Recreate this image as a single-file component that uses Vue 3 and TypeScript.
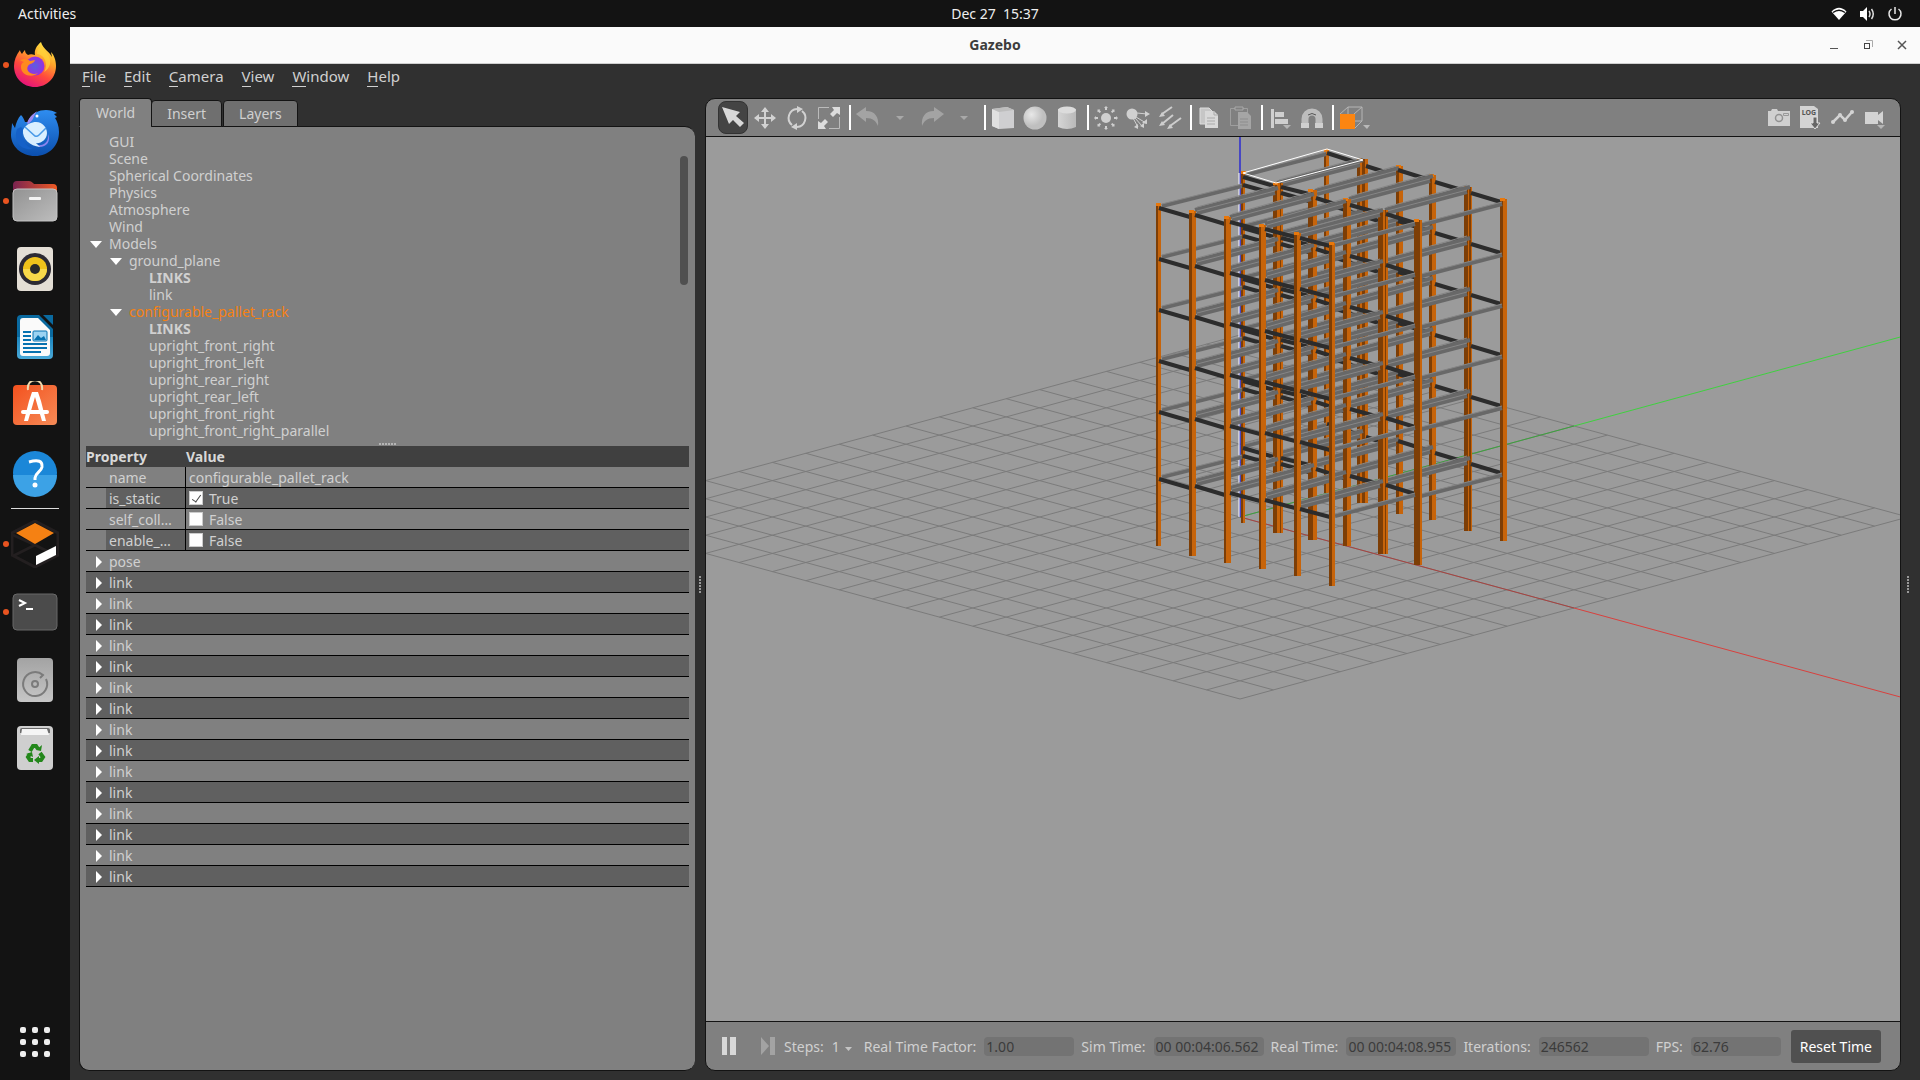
<script setup lang="ts">
import { ref } from 'vue'

interface TreeRow { label: string; depth: number; open?: boolean; bold?: boolean; selected?: boolean }
interface Prop { name: string; kind: 'text' | 'bool'; value: string }
type Seg = [number, number, number, number]
interface Post { x: number; top: number; bottom: number; strips: number[] }

const menus = ['File', 'Edit', 'Camera', 'View', 'Window', 'Help']
const tabs = ['World', 'Insert', 'Layers']
const activeTab = ref('World')

const tree: TreeRow[] = [
  { label: 'GUI', depth: 0 },
  { label: 'Scene', depth: 0 },
  { label: 'Spherical Coordinates', depth: 0 },
  { label: 'Physics', depth: 0 },
  { label: 'Atmosphere', depth: 0 },
  { label: 'Wind', depth: 0 },
  { label: 'Models', depth: 0, open: true },
  { label: 'ground_plane', depth: 1, open: true },
  { label: 'LINKS', depth: 2, bold: true },
  { label: 'link', depth: 2 },
  { label: 'configurable_pallet_rack', depth: 1, open: true, selected: true },
  { label: 'LINKS', depth: 2, bold: true },
  { label: 'upright_front_right', depth: 2 },
  { label: 'upright_front_left', depth: 2 },
  { label: 'upright_rear_right', depth: 2 },
  { label: 'upright_rear_left', depth: 2 },
  { label: 'upright_front_right', depth: 2 },
  { label: 'upright_front_right_parallel', depth: 2 },
  { label: 'upright_front_left_parallel', depth: 2 },
]

const props: Prop[] = [
  { name: 'name', kind: 'text', value: 'configurable_pallet_rack' },
  { name: 'is_static', kind: 'bool', value: 'True' },
  { name: 'self_coll…', kind: 'bool', value: 'False' },
  { name: 'enable_…', kind: 'bool', value: 'False' },
]
const groups: string[] = ['pose', ...Array.from({ length: 15 }, () => 'link')]

const stats = [
  { id: 'rtf', label: 'Real Time Factor:', value: '1.00', wide: false },
  { id: 'sim', label: 'Sim Time:', value: '00 00:04:06.562', wide: true },
  { id: 'real', label: 'Real Time:', value: '00 00:04:08.955', wide: true },
  { id: 'iter', label: 'Iterations:', value: '246562', wide: true },
  { id: 'fps', label: 'FPS:', value: '62.76', wide: false },
]

// Ground plane: 20 x 20 cells seen through an orthographic camera.
const origin = { x: 1240, y: 517 }
const cell = { x: 33.4, y: 9.1 }
const project = (x: number, y: number) => [origin.x + cell.x * (x + y), origin.y + cell.y * (x - y)]
const gridLines: Seg[] = []
for (let i = -10; i <= 10; i++) {
  gridLines.push([...project(i, -10), ...project(i, 10)] as Seg)
  gridLines.push([...project(-10, i), ...project(10, i)] as Seg)
}

// Rack: six columns, each with a back, middle and front post, and six shelf levels.
const levels = [271, 204, 153, 102, 51, 0]
const back: Post[] = [
  { x: 1324, top: 150, bottom: 493, strips: [2, 3] },
  { x: 1357, top: 159, bottom: 503, strips: [3, 2, 3, 3] },
  { x: 1396, top: 166, bottom: 514, strips: [3, 4] },
  { x: 1429, top: 175, bottom: 520, strips: [3, 4] },
  { x: 1464, top: 187, bottom: 531, strips: [4, 1, 2, 1] },
  { x: 1500, top: 199, bottom: 541, strips: [3, 4] },
]
const middle: Post[] = [
  { x: 1241, top: 172, bottom: 523, strips: [2, 2] },
  { x: 1273, top: 183, bottom: 533, strips: [4, 3, 1, 2] },
  { x: 1308, top: 190, bottom: 540, strips: [5, 4] },
  { x: 1343, top: 199, bottom: 546, strips: [4, 4] },
  { x: 1378, top: 210, bottom: 554, strips: [5, 2, 1, 2] },
  { x: 1414, top: 220, bottom: 565, strips: [6, 2] },
]
const front: Post[] = [
  { x: 1156, top: 204, bottom: 546, strips: [2, 3] },
  { x: 1189, top: 211, bottom: 556, strips: [3, 4] },
  { x: 1224, top: 217, bottom: 563, strips: [2, 5] },
  { x: 1259, top: 225, bottom: 569, strips: [2, 5] },
  { x: 1294, top: 233, bottom: 576, strips: [3, 4] },
  { x: 1329, top: 243, bottom: 586, strips: [3, 3] },
]
const backBeams: Seg[] = [
  [1245, 175, 1326, 154], [1279, 186, 1360, 165], [1317, 194, 1396, 173],
  [1351, 202, 1430, 181], [1387, 213, 1467, 192], [1421, 225, 1502, 204],
]
const frontBeams: Seg[] = [
  [1162, 206, 1242, 186], [1197, 213, 1275, 193], [1232, 220, 1311, 199],
  [1267, 227, 1343, 206], [1300, 236, 1380, 215], [1335, 245, 1415, 224],
]
const backBraces: Seg[] = [
  [1327, 153, 1358, 163], [1366, 166, 1388, 173], [1398, 170, 1430, 180],
  [1435, 182, 1465, 191], [1471, 193, 1501, 202],
]
const middleBraces: Seg[][] = [
  [[1243, 177, 1274, 186], [1243, 185, 1268, 192]],
  [[1281, 187, 1309, 194], [1281, 193, 1309, 201]],
  [[1316, 198, 1344, 207]],
  [[1350, 205, 1379, 213]],
  [[1386, 214, 1415, 223]],
]
const frontBraces: Seg[] = [
  [1159, 208, 1190, 217], [1195, 215, 1225, 224], [1230, 222, 1260, 230],
  [1265, 229, 1295, 237], [1300, 238, 1330, 246],
]

interface Shape { key: string; kind: 'brace' | 'beam' | 'edge' | 'dark' | 'lit' | 'cap'; d: string }
const shapes: Shape[] = []
let serial = 0
const add = (kind: Shape['kind'], d: string) => shapes.push({ key: `s${serial++}`, kind, d })
const brace = ([x1, y1, x2, y2]: Seg) =>
  levels.forEach((l) => add('brace', `M${x1} ${y1 + l}L${x2} ${y2 + l}`))
const beam = ([x1, y1, x2, y2]: Seg, twin: boolean) =>
  levels.forEach((l) => {
    if (twin) {
      add('beam', `M${x1 - 2} ${y1 + l - 3}L${x2 + 3} ${y2 + l - 5}`)
      add('edge', `M${x1} ${y1 + l - 6}L${x2} ${y2 + l - 7}`)
    }
    add('beam', `M${x1} ${y1 + l}L${x2} ${y2 + l}`)
    add('edge', `M${x1} ${y1 + l - 2}L${x2} ${y2 + l - 2}`)
  })
const post = (p: Post) => {
  let x = p.x
  p.strips.forEach((w, i) => {
    add(i % 2 ? 'lit' : 'dark', `M${x} ${p.top}h${w}V${p.bottom}h${-w}z`)
    x += w
  })
  add('cap', `M${p.x} ${p.top - 1}h5v3h-5z`)
}
for (let i = 0; i < 6; i++) {
  const twin = i > 0 && i < 5
  if (i > 0) brace(backBraces[i - 1])
  post(back[i])
  beam(backBeams[i], twin)
  if (i > 0) middleBraces[i - 1].forEach(brace)
  post(middle[i])
  beam(frontBeams[i], twin)
  if (i > 0) brace(frontBraces[i - 1])
  post(front[i])
}
</script>

<template>
  <div class="desktop">
    <header class="topbar">
      <button class="activities" type="button">Activities</button>
      <time class="clock">Dec 27&nbsp; 15:37</time>
      <div class="tray">
        <svg width="16" height="16" viewBox="0 0 16 16" aria-label="Wi-Fi"><path d="M.5 5.500Q8-2 15.500 5.500L8 14z" fill="#fff" /><path d="M2 5.500Q8 .8 14 5.500" fill="none" stroke="#131313" stroke-width="1.500" transform="translate(0 1)" /></svg>
        <svg width="16" height="16" viewBox="0 0 16 16" aria-label="Volume"><path d="M1 5h3l4-4v14l-4-4H1z" fill="#fff" /><path d="M10 5q2 3 0 6M12.500 3q3.500 5 0 10" fill="none" stroke="#ddd" stroke-width="1.500" /></svg>
        <svg width="16" height="16" viewBox="0 0 16 16" aria-label="Power"><path d="M4.500 3a6 6 0 1 0 7 0M8 1v7" fill="none" stroke="#e8e8e8" stroke-width="1.500" /></svg>
      </div>
    </header>

    <div class="workspace">
      <nav class="dock" aria-label="Dock">
        <button class="app running" type="button" aria-label="Firefox">
          <svg viewBox="0 0 48 48">
            <defs>
              <linearGradient id="ff" x1=".8" y1="0" x2=".3" y2="1"><stop offset="0" stop-color="#fff04a" /><stop offset=".35" stop-color="#ffa52a" /><stop offset=".65" stop-color="#ff4a3d" /><stop offset="1" stop-color="#e5107e" /></linearGradient>
              <radialGradient id="ffg"><stop offset="0" stop-color="#5a5fe0" /><stop offset="1" stop-color="#9a2fe0" /></radialGradient>
            </defs>
            <path d="M30 1c-5 4-7 9-6 13-3-1-5-1-7 0-2-1-3-3-3-5-1 1-2 2-3 4-1-1-2-3-2-4C5 14 3 20 3 25c0 12 9 21 21 21s21-9 21-21c0-6-2-11-5-14l1 5C38 10 32 8 30 1z" fill="url(#ff)" />
            <circle cx="24" cy="25" r="9.500" fill="url(#ffg)" />
            <path d="M9 19c5-2 8-1 10 1l5-1c-1 4-5 3-7 6-3 5 4 10 10 7-5 5-17 3-17-6 0-3 1-4 3-5-2-1-3-1-4-2z" fill="#ff8a1e" />
            <path d="M26 13c5 0 9 5 9 11 0 3-1 5-2 7 6-3 9-12 3-18-2-3-5-5-6-8-3 2-4 5-4 8z" fill="#ffd43a" opacity=".7" />
          </svg>
        </button>
        <button class="app" type="button" aria-label="Thunderbird">
          <svg viewBox="0 0 48 48">
            <defs><linearGradient id="tb" x1="0" y1="0" x2="0" y2="1"><stop offset="0" stop-color="#2f8df0" /><stop offset="1" stop-color="#0b4fae" /></linearGradient></defs>
            <path d="M10 6c2 2 3 4 4 7h3C20 4 28 1 35 1c4 0 8 1 11 3l-3 1 3 3-2 1c2 3 4 8 4 14 0 14-10 24-24 24S0 37 0 26c0-5 1-8 1-12l3 5C5 14 7 9 10 6z" fill="url(#tb)" />
            <path d="M16 14c3-8 7-9 10-12-5 7-2 8-9 13z" fill="#a08af0" />
            <path d="M6 20c-4 12 4 22 16 20-8-3-13-11-10-20l-2-2z" fill="#1561c8" />
            <path d="M37 25c1 8-4 12-11 11l2 2c8 0 12-6 9-13z" fill="#8b86ee" />
            <path d="M12 21c3-6 9-8 13-8 7 0 11 6 11 11 0 7-7 11-11 10l4 4c-10-1-18-8-17-17z" fill="#d9efff" />
            <path d="M14 18l10 9q2 1 4-1l7-7" fill="none" stroke="#4a9be8" stroke-width="1.500" /><circle cx="26" cy="7" r="1.500" fill="#fff" />
          </svg>
        </button>
        <button class="app running" type="button" aria-label="Files">
          <svg viewBox="0 0 48 48">
            <defs><linearGradient id="fd"><stop offset="0" stop-color="#7a2350" /><stop offset="1" stop-color="#ee5a24" /></linearGradient><linearGradient id="fb" x1="0" y1="0" x2="1" y2="1"><stop offset="0" stop-color="#929292" /><stop offset="1" stop-color="#bdbdbd" /></linearGradient></defs>
            <path d="M2 8q0-4 4-4h12q2 0 4 2l1 1h19q4 0 4 4v10H2z" fill="url(#fd)" />
            <rect x="2" y="12" width="44" height="32" rx="4" fill="url(#fb)" stroke="#c4c4c4" /><rect x="18" y="20" width="12" height="3" rx="1" fill="#f4f4f4" />
          </svg>
        </button>
        <button class="app" type="button" aria-label="Rhythmbox">
          <svg viewBox="0 0 48 48">
            <rect x="6" y="2" width="36" height="44" rx="4" fill="#e3ded5" /><circle cx="24" cy="24" r="16" fill="#2c2a33" /><circle cx="24" cy="24" r="12" fill="#efc21b" /><path d="M12 24a12 12 0 0 0 24 0z" fill="#f8d94a" /><circle cx="24" cy="24" r="5" fill="#2a2a2a" />
          </svg>
        </button>
        <button class="app" type="button" aria-label="LibreOffice Writer">
          <svg viewBox="0 0 48 48">
            <defs><linearGradient id="wr" x1="0" y1="0" x2="0" y2="1"><stop offset=".49" stop-color="#0a6aa0" /><stop offset=".5" stop-color="#1c86bf" /><stop offset="1" stop-color="#4aa9d8" /></linearGradient></defs>
            <path d="M10 2h18l14 14v26q0 4-4 4H10q-4 0-4-4V6q0-4 4-4z" fill="url(#wr)" /><path d="M9 8q0-3 3-3h15l12 12v23q0 3-3 3H12q-3 0-3-3z" fill="#fafafa" /><path d="M32 2h10v10z" fill="#0a6aa0" />
            <path d="M12 19h8M12 23h8M12 27h8M12 31h24M12 35h24M12 39h18" stroke="#0772b0" stroke-width="2" /><rect x="22" y="18" width="14" height="10" rx="1" fill="#9bd3f2" stroke="#0772b0" /><path d="M23 27l4-5 3 3 3-2 2 4z" fill="#0772b0" />
          </svg>
        </button>
        <button class="app" type="button" aria-label="Ubuntu Software">
          <svg viewBox="0 0 48 48">
            <defs><linearGradient id="sw" x1="0" y1="0" x2="1" y2="1"><stop offset="0" stop-color="#f4511e" /><stop offset="1" stop-color="#f58b57" /></linearGradient></defs>
            <rect x="2" y="4" width="44" height="40" rx="4" fill="url(#sw)" /><path d="M17 9c-2-13 16-13 14 0" fill="none" stroke="#f0d9ae" stroke-width="2" />
            <path d="M21 11h6l3 9 5 20h-4L24 16l-7 24h-4l5-20z" fill="#fff" /><rect x="10" y="29" width="28" height="4" rx="2" fill="#fff" />
          </svg>
        </button>
        <button class="app" type="button" aria-label="Help">
          <svg viewBox="0 0 48 48">
            <circle cx="24" cy="24" r="22" fill="#1b87d8" /><path d="M2 26a22 22 0 0 0 44 0z" fill="#3ca2e6" /><path d="M18 13q14-4 13 5c-1 5-6 5-7 11v2" fill="none" stroke="#fff" stroke-width="3" /><circle cx="24" cy="36" r="2.500" fill="#fff" />
          </svg>
        </button>
        <hr class="dock-rule" />
        <button class="app running" type="button" aria-label="Gazebo">
          <svg viewBox="0 0 48 48">
            <path d="M24 1l23 12v22L24 47 1 35V13z" fill="none" stroke="#231f20" stroke-width="3" /><path d="M24 25L2 36M24 25l22 11M2 15l22 10" fill="none" stroke="#231f20" stroke-width="3" />
            <path d="M24 3l19 10-19 11L5 13z" fill="#f58113" /><path d="M25 36l20-10v9L25 45z" fill="#fff" />
          </svg>
        </button>
        <button class="app running" type="button" aria-label="Terminal">
          <svg viewBox="0 0 48 48">
            <rect x="2" y="6" width="44" height="36" rx="4" fill="#4b4b4b" stroke="#696969" /><path d="M8 12l6 3-6 3M15 21h7" fill="none" stroke="#fff" stroke-width="2" />
          </svg>
        </button>
        <button class="app" type="button" aria-label="Disk">
          <svg viewBox="0 0 48 48">
            <defs><linearGradient id="dk" x1="0" y1="0" x2="0" y2="1"><stop offset="0" stop-color="#a3a3a3" /><stop offset="1" stop-color="#c6c6c6" /></linearGradient></defs>
            <rect x="6" y="2" width="36" height="44" rx="4" fill="url(#dk)" /><circle cx="24" cy="28" r="3" fill="none" stroke="#7b7b7b" stroke-width="2" /><path d="M35 23a12 12 0 1 1-3-4l-3 3" fill="none" stroke="#7b7b7b" stroke-width="2" />
          </svg>
        </button>
        <button class="app" type="button" aria-label="Trash">
          <svg viewBox="0 0 48 48">
            <rect x="6" y="2" width="36" height="44" rx="4" fill="#cfcfcf" /><path d="M9 9V6q0-2 2-2h26q2 0 2 2v3z" fill="#6b6b6b" /><path d="M11 5h25l2 6H10z" fill="#f5f5f5" />
            <g fill="none" stroke="#23871b" stroke-width="4"><path d="M19 27l3-5h3l2 3" /><path d="M29 29l3 4-2 3h-3" /><path d="M22 36h-3l-2-3 2-3" /></g><g fill="#23871b"><path d="M25 26l5 1 1-6z" /><path d="M28 32v8l-5-4z" /><path d="M15 30l6-2 1 5z" /></g>
          </svg>
        </button>
        <button class="app launcher" type="button" aria-label="Show Applications">
          <svg viewBox="0 0 48 48" fill="#eee"><template v-for="r in 3" :key="r"><rect v-for="c in 3" :key="c" :x="c * 12 - 3" :y="r * 12 - 3" width="6" height="6" rx="2" /></template></svg>
        </button>
      </nav>

      <main class="window">
        <div class="titlebar">
          <h1>Gazebo</h1>
          <div class="controls">
            <button type="button" aria-label="Minimize"><svg width="12" height="12" viewBox="0 0 12 12"><path d="M2 9.500h8" stroke="#555" /></svg></button>
            <button type="button" aria-label="Restore"><svg width="12" height="12" viewBox="0 0 12 12" fill="none"><path d="M4 1.500h6.500V8" stroke="#aaa" /><rect x="2.500" y="4.500" width="5" height="5" stroke="#444" /></svg></button>
            <button type="button" aria-label="Close"><svg width="12" height="12" viewBox="0 0 12 12"><path d="M2 2l8 8M10 2l-8 8" stroke="#555" stroke-width="1.500" /></svg></button>
          </div>
        </div>
        <nav class="menubar"><button v-for="m in menus" :key="m" type="button"><span class="key">{{ m[0] }}</span>{{ m.slice(1) }}</button></nav>

        <div class="content">
          <section class="side">
            <div class="tabs" role="tablist">
              <button v-for="t in tabs" :key="t" type="button" role="tab" :class="{ active: activeTab === t }" @click="activeTab = t">{{ t }}</button>
            </div>
            <div class="panel">
              <div class="tree-area">
                <ul class="tree">
                  <li v-for="(row, i) in tree" :key="i" :class="['depth-' + row.depth, { bold: row.bold, selected: row.selected }]">
                    <span class="twisty"><svg v-if="row.open" width="12" height="7" viewBox="0 0 12 7"><path d="M0 0h12L6 7z" fill="#fff" /></svg></span>{{ row.label }}
                  </li>
                </ul>
                <div class="scrollbar"></div>
              </div>
              <div class="grip"></div>
              <table class="props">
                <colgroup><col class="col-name" /><col /></colgroup>
                <thead><tr><th>Property</th><th>Value</th></tr></thead>
                <tbody>
                  <tr v-for="p in props" :key="p.name" class="leaf">
                    <td>{{ p.name }}</td>
                    <td>
                      <label v-if="p.kind === 'bool'"><input type="checkbox" :checked="p.value === 'True'" />{{ p.value }}</label>
                      <template v-else>{{ p.value }}</template>
                    </td>
                  </tr>
                  <tr v-for="(g, i) in groups" :key="i" class="group">
                    <td colspan="2"><svg width="6" height="12" viewBox="0 0 6 12"><path d="M0 0l6 6-6 6z" fill="#fff" /></svg>{{ g }}</td>
                  </tr>
                </tbody>
              </table>
            </div>
          </section>

          <div class="splitter"></div>

          <section class="view">
            <div class="toolbar">
              <button type="button" class="tool on" aria-label="Select"><svg viewBox="0 0 24 24"><path d="M1 1l18 5-4 4 8 7-4 4-7-7-4 4z" fill="#d8d8d8" /></svg></button>
              <button type="button" class="tool" aria-label="Translate"><svg viewBox="0 0 24 24"><path d="M12 1l4 5h-3v5h5V8l5 4-5 4v-3h-5v5h3l-4 5-4-5h3v-5H6v3l-5-4 5-4v3h5V6H8z" fill="#d2d2d2" /></svg></button>
              <button type="button" class="tool" aria-label="Rotate"><svg viewBox="0 0 24 24"><path d="M7 19A9 9 0 0 1 12 3M17 5a9 9 0 0 1-5 16" fill="none" stroke="#d2d2d2" stroke-width="2" /><path d="M12 0l6 3-6 4zM12 17v7l-6-3z" fill="#d2d2d2" /></svg></button>
              <button type="button" class="tool" aria-label="Scale"><svg viewBox="0 0 24 24"><path d="M12 1.500H1.500V13M12 22.500h10.500V11" fill="none" stroke="#bbb" stroke-width="1" /><path d="M23 1v8l-3-2-4 4-3-3 4-4-2-3zM1 23v-8l3 2 4-4 3 3-4 4 2 3z" fill="#ddd" /></svg></button>
              <i class="sep"></i>
              <button type="button" class="tool" aria-label="Undo"><svg viewBox="0 0 24 24"><path d="M0 8l10-7v4c9 0 13 6 12 15-2-5-5-8-12-8v4z" fill="#a3a3a3" /></svg></button>
              <button type="button" class="tool" aria-label="Undo history"><svg viewBox="0 0 24 24"><path d="M8 10h8l-4 4z" fill="#a8a8a8" /></svg></button>
              <button type="button" class="tool" aria-label="Redo"><svg viewBox="0 0 24 24"><path d="M24 8L14 1v4C5 5 1 11 2 20c2-5 5-8 12-8v4z" fill="#a3a3a3" /></svg></button>
              <button type="button" class="tool" aria-label="Redo history"><svg viewBox="0 0 24 24"><path d="M8 10h8l-4 4z" fill="#a8a8a8" /></svg></button>
              <i class="sep"></i>
              <button type="button" class="tool" aria-label="Box"><svg viewBox="0 0 24 24"><path d="M1 3l15-2 7 3v18L8 23l-7-3z" fill="#cfcfd1" /><path d="M1 3l7 3v17l-7-3z" fill="#e0e0e0" /><path d="M1 3l15-2 7 3L8 6z" fill="#bdbdbd" /></svg></button>
              <button type="button" class="tool" aria-label="Sphere"><svg viewBox="0 0 24 24"><defs><radialGradient id="sp" cx=".35" cy=".35"><stop offset="0" stop-color="#e8e8e8" /><stop offset="1" stop-color="#bfbfbf" /></radialGradient></defs><circle cx="12" cy="12" r="11.500" fill="url(#sp)" /></svg></button>
              <button type="button" class="tool" aria-label="Cylinder"><svg viewBox="0 0 24 24"><defs><linearGradient id="cy"><stop offset="0" stop-color="#d5d5d5" /><stop offset="1" stop-color="#b9b9b9" /></linearGradient></defs><path d="M3 3v18q9 4 18 0V3z" fill="url(#cy)" /><ellipse cx="12" cy="4" rx="9" ry="3.500" fill="#dcdcdc" /></svg></button>
              <i class="sep"></i>
              <button type="button" class="tool" aria-label="Point light"><svg viewBox="0 0 24 24" fill="#d0d0d0"><circle cx="12" cy="12" r="5" /><path v-for="a in 8" :key="a" d="M11 4V2h-1l2-2 2 2h-1v2z" :transform="`rotate(${a * 45} 12 12)`" /></svg></button>
              <button type="button" class="tool" aria-label="Spot light"><svg viewBox="0 0 24 24" fill="#d0d0d0"><circle cx="6" cy="8" r="5.500" /><path d="M11 7l10 1M10 11l10 6M7 12l5 9M9 12l7 8" stroke="#d0d0d0" stroke-width="1" /><path d="M19 5l5 3-5 3zM21 13v5l-5-1zM18 17v5l-4-2zM12 18v5l-4-2z" /></svg></button>
              <button type="button" class="tool" aria-label="Directional light"><svg viewBox="0 0 24 24" fill="#cdcdcd"><path d="M14 1L4 8M15 9L4 18M23 12l-11 8" stroke="#cdcdcd" stroke-width="2" /><path d="M1 11l3-5 3 4zM1 20l3-5 3 4zM9 23l3-5 3 4z" /></svg></button>
              <i class="sep"></i>
              <button type="button" class="tool" aria-label="Copy"><svg viewBox="0 0 24 24"><path d="M3 2h9l3 3v13H3z" fill="#c6c6c6" stroke="#ddd" /><path d="M8 5h9l4 4v13H8z" fill="#d8d8d8" /><path d="M17 5v4h4M10 12h8M10 15h8M10 18h8" fill="none" stroke="#aaa" /></svg></button>
              <button type="button" class="tool" aria-label="Paste"><svg viewBox="0 0 24 24"><path d="M1.500 2.500h17v17h-17z" fill="none" stroke="#9e9e9e" /><path d="M6 1h8v3H6z" fill="#808080" stroke="#a8a8a8" /><path d="M9 6h9l4 4v13H9z" fill="#a5a5a5" /><path d="M11 13h8M11 16h8M11 19h8" stroke="#8d8d8d" /></svg></button>
              <i class="sep"></i>
              <button type="button" class="tool" aria-label="Align"><svg viewBox="0 0 24 24"><path d="M3 3h3v19H3zM7 6h9v5H7zM7 13h13v5H7z" fill="#cfcfcf" /><path d="M15 19h8l-4 4z" fill="#b5b5b5" /></svg></button>
              <button type="button" class="tool" aria-label="Snap"><svg viewBox="0 0 24 24"><path d="M5 22v-9a7 7 0 0 1 14 0v9" fill="none" stroke="#bdbdbd" stroke-width="7" /><path d="M1 17h8v5H1zM15 17h8v5h-8z" fill="#d0d0d0" /><path d="M8 9q4-3 8 0" fill="none" stroke="#555" /></svg></button>
              <i class="sep"></i>
              <button type="button" class="tool wide" aria-label="View angle"><svg class="wide-icon" viewBox="0 0 32 24"><path d="M1 8L9 1h14v14l-8 8M23 1l-8 7M9 1v14h14M9 15l-8 8" fill="none" stroke="#b5b5b5" /><path d="M1 8h15v15H1z" fill="#fb8511" /><path d="M24 19h7l-3 4z" fill="#b9b9b9" /></svg></button>
              <span class="spacer"></span>
              <button type="button" class="tool" aria-label="Screenshot"><svg viewBox="0 0 24 24"><path d="M1 5h3l1-2h5l1 2h12v15H1z" fill="#d0d0d0" /><circle cx="12" cy="12" r="3.500" fill="none" stroke="#929292" stroke-width="1.500" /><path d="M16.500 7.500h5v2h-5z" fill="none" stroke="#999" /></svg></button>
              <button type="button" class="tool" aria-label="Log data"><svg viewBox="0 0 24 24"><path d="M1 0h14l4 3v19H1z" fill="#d3d3d3" /><text x="10" y="9" text-anchor="middle" font-family="Noto Sans, sans-serif" font-size="7" font-weight="700" fill="#555">LOG</text><path d="M14 11h4v6h3l-5 6-5-6h3z" fill="#666" stroke="#ddd" stroke-width="1" /></svg></button>
              <button type="button" class="tool" aria-label="Plot"><svg viewBox="0 0 24 24"><path d="M2 16l7-7 5 5 7-8" fill="none" stroke="#d3d3d3" stroke-width="2.500" /><g fill="#d3d3d3"><circle cx="2" cy="16" r="2" /><circle cx="9" cy="9" r="2" /><circle cx="14" cy="14" r="2" /><circle cx="21" cy="6" r="2" /></g></svg></button>
              <button type="button" class="tool" aria-label="Record video"><svg viewBox="0 0 24 24"><path d="M2 6h13v3l5-4v13l-5-4v4H2z" fill="#d3d3d3" /><path d="M14 19h8l-4 4z" fill="#b5b5b5" /></svg></button>
            </div>

            <div class="viewport">
              <svg viewBox="706 137 1194 884" preserveAspectRatio="xMidYMid slice" aria-label="3D scene">
                <g stroke="#7b7b7b" stroke-width="1"><line v-for="(l, i) in gridLines" :key="i" :x1="l[0]" :y1="l[1]" :x2="l[2]" :y2="l[3]" /></g>
                <path d="M1240 517L1574 608" stroke="#a84340" /><path d="M1574 608L1904 698" stroke="#d8413e" />
                <path d="M1240 517L1574 426" stroke="#3ca33c" /><path d="M1574 426L1904 336" stroke="#3fd13f" />
                <path d="M1240 137V517" stroke="#2b2bd0" stroke-width="1.500" /><path d="M1239 173V517" stroke="#fff" stroke-width="1" />
                <path v-for="s in shapes" :key="s.key" :class="s.kind" :d="s.d" />
                <path d="M1243 173L1327 149L1363 160L1276 183z" fill="none" stroke="#fff" stroke-width="1" />
              </svg>
            </div>

            <footer class="status">
              <button type="button" class="play" aria-label="Pause"><svg width="14" height="18" viewBox="0 0 14 18"><path d="M0 0h5v18H0zM8 0h6v18H8z" fill="#d8d8d8" /></svg></button>
              <button type="button" class="step" aria-label="Step"><svg width="14" height="18" viewBox="0 0 14 18"><path d="M0 0l8 9-8 9zM9 0h5v18H9z" fill="#a3a3a3" /></svg></button>
              <label for="steps">Steps:</label>
              <select id="steps"><option>1</option></select>
              <svg class="caret" width="7" height="4" viewBox="0 0 7 4"><path d="M0 0h7L3.500 4z" fill="#c4c4c4" /></svg>
              <template v-for="s in stats" :key="s.id">
                <label :for="s.id">{{ s.label }}</label>
                <input :id="s.id" type="text" readonly :value="s.value" :class="{ long: s.wide }" />
              </template>
              <button type="button" class="reset">Reset Time</button>
            </footer>
          </section>

          <div class="splitter end"></div>
        </div>
      </main>
    </div>
  </div>
</template>

<style>
body { margin: 0; background: #303030; }
</style>

<style scoped>
* { box-sizing: border-box; }
.desktop { display: flex; flex-direction: column; height: 100vh; overflow: hidden; font: 14px/17px "Noto Sans", "Open Sans", sans-serif; color: #d0d0d0; background: #303030; }
button { font: inherit; color: inherit; background: none; border: 0; padding: 0; margin: 0; }
svg { display: block; }

.topbar { display: grid; grid-template-columns: 1fr auto 1fr; align-items: center; flex: 0 0 27px; background: #131313; color: #eee; }
.activities { justify-self: start; padding-left: 18px; }
.clock { padding-left: 70px; }
.tray { justify-self: end; display: flex; gap: 12px; padding-right: 17px; }

.workspace { display: flex; flex: 1; min-height: 0; }
.dock { flex: 0 0 70px; display: flex; flex-direction: column; padding: 4px 0; background: #131313; }
.app { position: relative; display: flex; align-items: center; justify-content: center; height: 68px; }
.app svg { width: 48px; height: 48px; }
.running::before { content: ""; position: absolute; left: 3px; top: 31px; width: 6px; height: 6px; border-radius: 50%; background: #e95420; }
.dock-rule { width: 48px; height: 1px; margin: 1px auto; border: 0; background: #ddd; }
.launcher { margin-top: auto; }

.window { flex: 1; min-width: 0; display: flex; flex-direction: column; background: #303030; }
.titlebar { display: grid; grid-template-columns: 1fr auto 1fr; align-items: center; flex: 0 0 37px; background: #fafafa; border-bottom: 1px solid #cfcfcf; color: #3d3d3d; }
.titlebar h1 { grid-column: 2; margin: 0; font-size: 14px; line-height: 20px; font-weight: 700; }
.controls { justify-self: end; display: flex; gap: 22px; padding-right: 12px; }
.menubar { display: flex; gap: 18px; flex: 0 0 34px; padding: 0 12px 10px; font-size: 15px; line-height: 24px; }
.key { border-bottom: 1px solid #d0d0d0; }

.content { flex: 1; min-height: 0; display: grid; grid-template-columns: minmax(0, 616fr) 10px minmax(0, 1196fr) 19px; padding: 0 0 9px 9px; }
.side { display: flex; flex-direction: column; min-height: 0; }
.tabs { display: flex; align-items: flex-end; height: 29px; margin-bottom: -1px; z-index: 1; }
.tabs button { height: 27px; padding: 0 15px; margin-right: 1px; background: #6f6f6f; border: 1px solid #131313; border-radius: 4px 4px 0 0; }
.tabs .active { height: 29px; padding: 0 16px; margin-right: -1px; background: #808080; border-bottom-color: #808080; }
.panel { flex: 1; min-height: 0; display: flex; flex-direction: column; padding: 6px; background: #808080; border: 1px solid #131313; border-right: 0; border-radius: 0 10px 10px 10px; }
.tree-area { flex: 0 0 309px; display: flex; overflow: hidden; }
.tree { flex: 1; margin: 0; padding: 0; list-style: none; }
.tree li { display: flex; align-items: center; height: 17px; white-space: pre; }
.depth-0 { padding-left: 3px; }
.depth-1 { padding-left: 23px; }
.depth-2 { padding-left: 43px; }
.twisty { flex: 0 0 20px; padding: 2px 0 0 1px; }
.bold { font-weight: 700; }
.selected { color: #f58113; }
.scrollbar { width: 8px; height: 129px; margin: 23px 1px 0 0; border-radius: 4px; background: #505050; }
.grip { flex: 0 0 2px; width: 17px; margin: 1px auto; background: repeating-linear-gradient(90deg, #b5b5b5 0 2px, transparent 2px 3px); }

.props { width: 100%; table-layout: fixed; border-collapse: separate; border-spacing: 0; }
.col-name { width: 100px; }
.props th { height: 21px; padding: 0; text-align: left; font-weight: 700; background: #404040; color: #d8d8d8; }
.props td { height: 21px; padding: 0; border-bottom: 1px solid #000; white-space: nowrap; }
.props tr:nth-child(even) td { background: #606060; }
.leaf td:first-child { padding-left: 23px; border-right: 1px solid #000; }
.props .leaf:nth-child(even) td:first-child { background: linear-gradient(90deg, #808080 20px, #606060 20px); }
.leaf td + td { padding-left: 3px; }
.leaf label { display: flex; align-items: center; gap: 6px; }
.leaf input { appearance: none; width: 14px; height: 14px; margin: 0; background: #fff; border: 1px solid #ccc; }
.leaf input:checked::after { content: ""; display: block; width: 4px; height: 8px; margin: 1px 0 0 4px; border: solid #444; border-width: 0 1px 1px 0; transform: rotate(35deg); }
.group svg { display: inline-block; margin: 0 7px 0 10px; vertical-align: -1px; }

.splitter { align-self: center; justify-self: center; width: 2px; height: 17px; background: repeating-linear-gradient(#999 0 2px, transparent 2px 3px); }
.end { justify-self: start; margin-left: 6px; }

.view { display: flex; flex-direction: column; min-width: 0; min-height: 0; overflow: hidden; background: #808080; border: 1px solid #131313; border-radius: 10px; }
.toolbar { display: flex; align-items: center; flex: 0 0 38px; padding: 0 9px 0 11px; border-bottom: 1px solid #131313; }
.tool { display: flex; align-items: center; justify-content: center; width: 32px; height: 33px; }
.tool svg { width: 24px; height: 24px; }
.on { width: 30px; margin: 0 1px; background: #444; border: 1px solid #333; border-radius: 8px; }
.wide { width: 40px; }
.tool .wide-icon { width: 32px; }
.sep { width: 2px; height: 25px; margin: 0 1px 0 4px; background: #fff; }
.spacer { flex: 1; }

.viewport { flex: 1; min-height: 0; background: #9b9b9b; }
.viewport svg { width: 100%; height: 100%; }
.brace { stroke: #2c2c2c; stroke-width: 4; }
.beam { stroke: #686868; stroke-width: 4; }
.edge { stroke: #868686; stroke-width: 1; }
.dark { fill: #7d3e06; }
.lit { fill: #c7640a; }
.cap { fill: #e8780c; }

.status { display: flex; align-items: center; flex: 0 0 49px; padding: 0 19px 0 16px; border-top: 1px solid #131313; white-space: nowrap; }
.step { margin: 0 9px 0 25px; }
.status select { appearance: none; width: 12px; height: 20px; margin: 0 0 0 8px; padding: 0; border: 0; font: inherit; color: inherit; background: none; }
.caret { margin: 6px 12px 0 1px; }
.status input { flex: 0 1 90px; min-width: 0; height: 19px; margin: 0 7px 0 8px; padding: 0 2px; border: 0; border-radius: 4px; background: #737373; color: #3b3b3b; font: inherit; }
.status .long { flex-basis: 110px; }
.reset { height: 33px; margin-left: auto; padding: 0 9px; background: #505050; border-radius: 3px; color: #fff; }
</style>
